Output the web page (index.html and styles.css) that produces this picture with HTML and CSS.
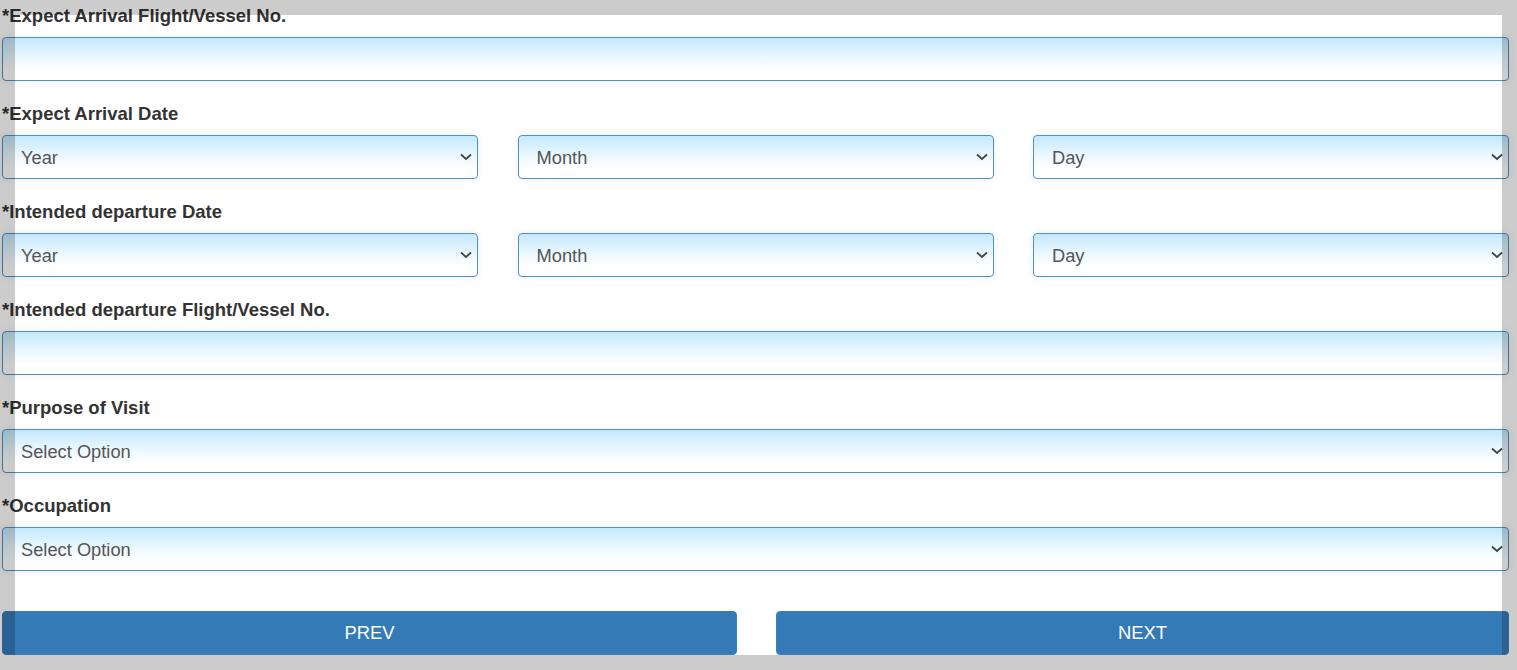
FILE: index.html
```html
<!DOCTYPE html>
<html lang="en">
<head>
<meta charset="utf-8">
<title>Travel Details</title>
<link rel="stylesheet" href="styles.css">
</head>
<body>
<form class="form">
  <div class="group">
    <label class="label">*Expect Arrival Flight/Vessel No.</label>
    <input class="field" type="text">
  </div>
  <div class="group">
    <label class="label">*Expect Arrival Date</label>
    <div class="triple">
      <div class="sel"><select class="field"><option>Year</option></select><svg class="chev" viewBox="0 0 12 8"><path d="M1 1.5 L6 6 L11 1.5"/></svg></div>
      <div class="sel"><select class="field"><option>Month</option></select><svg class="chev" viewBox="0 0 12 8"><path d="M1 1.5 L6 6 L11 1.5"/></svg></div>
      <div class="sel"><select class="field"><option>Day</option></select><svg class="chev" viewBox="0 0 12 8"><path d="M1 1.5 L6 6 L11 1.5"/></svg></div>
    </div>
  </div>
  <div class="group">
    <label class="label">*Intended departure Date</label>
    <div class="triple">
      <div class="sel"><select class="field"><option>Year</option></select><svg class="chev" viewBox="0 0 12 8"><path d="M1 1.5 L6 6 L11 1.5"/></svg></div>
      <div class="sel"><select class="field"><option>Month</option></select><svg class="chev" viewBox="0 0 12 8"><path d="M1 1.5 L6 6 L11 1.5"/></svg></div>
      <div class="sel"><select class="field"><option>Day</option></select><svg class="chev" viewBox="0 0 12 8"><path d="M1 1.5 L6 6 L11 1.5"/></svg></div>
    </div>
  </div>
  <div class="group">
    <label class="label">*Intended departure Flight/Vessel No.</label>
    <input class="field" type="text">
  </div>
  <div class="group">
    <label class="label">*Purpose of Visit</label>
    <div class="sel"><select class="field"><option>Select Option</option></select><svg class="chev" viewBox="0 0 12 8"><path d="M1 1.5 L6 6 L11 1.5"/></svg></div>
  </div>
  <div class="group last">
    <label class="label">*Occupation</label>
    <div class="sel"><select class="field"><option>Select Option</option></select><svg class="chev" viewBox="0 0 12 8"><path d="M1 1.5 L6 6 L11 1.5"/></svg></div>
  </div>
  <div class="buttons">
    <button type="button" class="btn">PREV</button>
    <button type="button" class="btn">NEXT</button>
  </div>
</form>
<div class="frame"></div>
</body>
</html>
```
FILE: styles.css
```css
html, body {
  margin: 0;
  padding: 0;
  background: #fff;
  overflow: hidden;
}
body {
  font-family: "Liberation Sans", Arial, sans-serif;
  color: #333;
  width: 1517px;
  height: 670px;
}
.form {
  width: 1507px;
  padding: 6px 0 0 2px;
}
.group {
  display: flex;
  flex-direction: column;
  margin-bottom: 23px;
}
.group.last {
  margin-bottom: 40px;
}
.label {
  font-size: 18.5px;
  font-weight: bold;
  line-height: 20px;
  margin-bottom: 11px;
  color: #333;
}
.field {
  box-sizing: border-box;
  display: block;
  width: 100%;
  height: 44px;
  margin: 0;
  padding: 1px 30px 0 18px;
  border: 1px solid #4a93c6;
  border-radius: 4px;
  background: linear-gradient(to bottom, #c3e8fc 0%, #e6f6fe 40%, #ffffff 78%, #ffffff 100%);
  box-shadow: 0 0 8px rgba(0, 0, 0, 0.07);
  font-family: "Liberation Sans", Arial, sans-serif;
  font-size: 18.3px;
  color: #555;
  outline: none;
  -webkit-appearance: none;
  appearance: none;
}
.triple {
  display: grid;
  grid-template-columns: repeat(3, 1fr);
  column-gap: 39.5px;
}
.sel {
  position: relative;
}
.chev {
  position: absolute;
  right: 6px;
  top: 18px;
  width: 12px;
  height: 8px;
  fill: none;
  stroke: #444;
  stroke-width: 1.8;
  pointer-events: none;
}
.buttons {
  display: grid;
  grid-template-columns: 735px 733px;
  column-gap: 39px;
}
.btn {
  height: 44px;
  margin: 0;
  border: 1px solid #3a7fba;
  border-radius: 4px;
  background: #337ab7;
  color: #fff;
  font-family: "Liberation Sans", Arial, sans-serif;
  font-size: 18.4px;
  padding: 0;
}
.frame {
  position: fixed;
  left: 15px;
  top: 15px;
  width: 1487px;
  height: 640px;
  box-shadow: 0 0 0 3000px rgba(0, 0, 0, 0.2);
  pointer-events: none;
}
```
